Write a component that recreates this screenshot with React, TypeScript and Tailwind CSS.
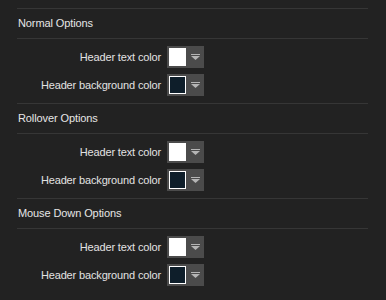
import React from "react";

function Arrow() {
  return (
    <svg width="9" height="6" viewBox="0 0 9 6" className="block">
      <rect x="0" y="0" width="9" height="1" fill="#b5b5b5" />
      <polygon points="0,2 9,2 4.5,6" fill="#b5b5b5" />
    </svg>
  );
}

function ColorButton({ color, dark }: { color: string; dark?: boolean }) {
  return (
    <div className="flex h-[22px] w-[37px] items-center bg-[#4b4b4b] pl-[2px]">
      <div
        className={
          dark
            ? "h-[18px] w-[17px] border border-white bg-[#0e1e2a]"
            : "h-[18px] w-[17px] bg-white"
        }
        style={{ backgroundColor: color }}
      />
      <div className="flex flex-1 items-center justify-center">
        <Arrow />
      </div>
    </div>
  );
}

function Row({ label, color, dark }: { label: string; color: string; dark?: boolean }) {
  return (
    <div className="flex h-[22px] items-center">
      <div className="w-[144px] text-right text-[11px] tracking-[-0.15px] text-[#e2e2e2]">{label}</div>
      <div className="ml-[6px]">
        <ColorButton color={color} dark={dark} />
      </div>
    </div>
  );
}

function Section({ title }: { title: string }) {
  return (
    <div className="border-t border-[#363636]">
      <div className="flex h-[29px] items-center pl-[1px] text-[11px] tracking-[-0.1px] text-[#e6e6e6]">{title}</div>
      <div className="border-t border-[#363636] pt-[7px] pb-[7px]">
        <div className="flex flex-col gap-[6px]">
          <Row label="Header text color" color="#ffffff" />
          <Row label="Header background color" color="#0e1e2a" dark />
        </div>
      </div>
    </div>
  );
}

export default function App() {
  return (
    <div
      className="h-[300px] w-[386px] overflow-hidden bg-[#222222] pt-[8px] pl-[17px] pr-[18px]"
      style={{ fontFamily: '"Liberation Sans", Arial, sans-serif' }}
    >
      <Section title="Normal Options" />
      <Section title="Rollover Options" />
      <Section title="Mouse Down Options" />
    </div>
  );
}
